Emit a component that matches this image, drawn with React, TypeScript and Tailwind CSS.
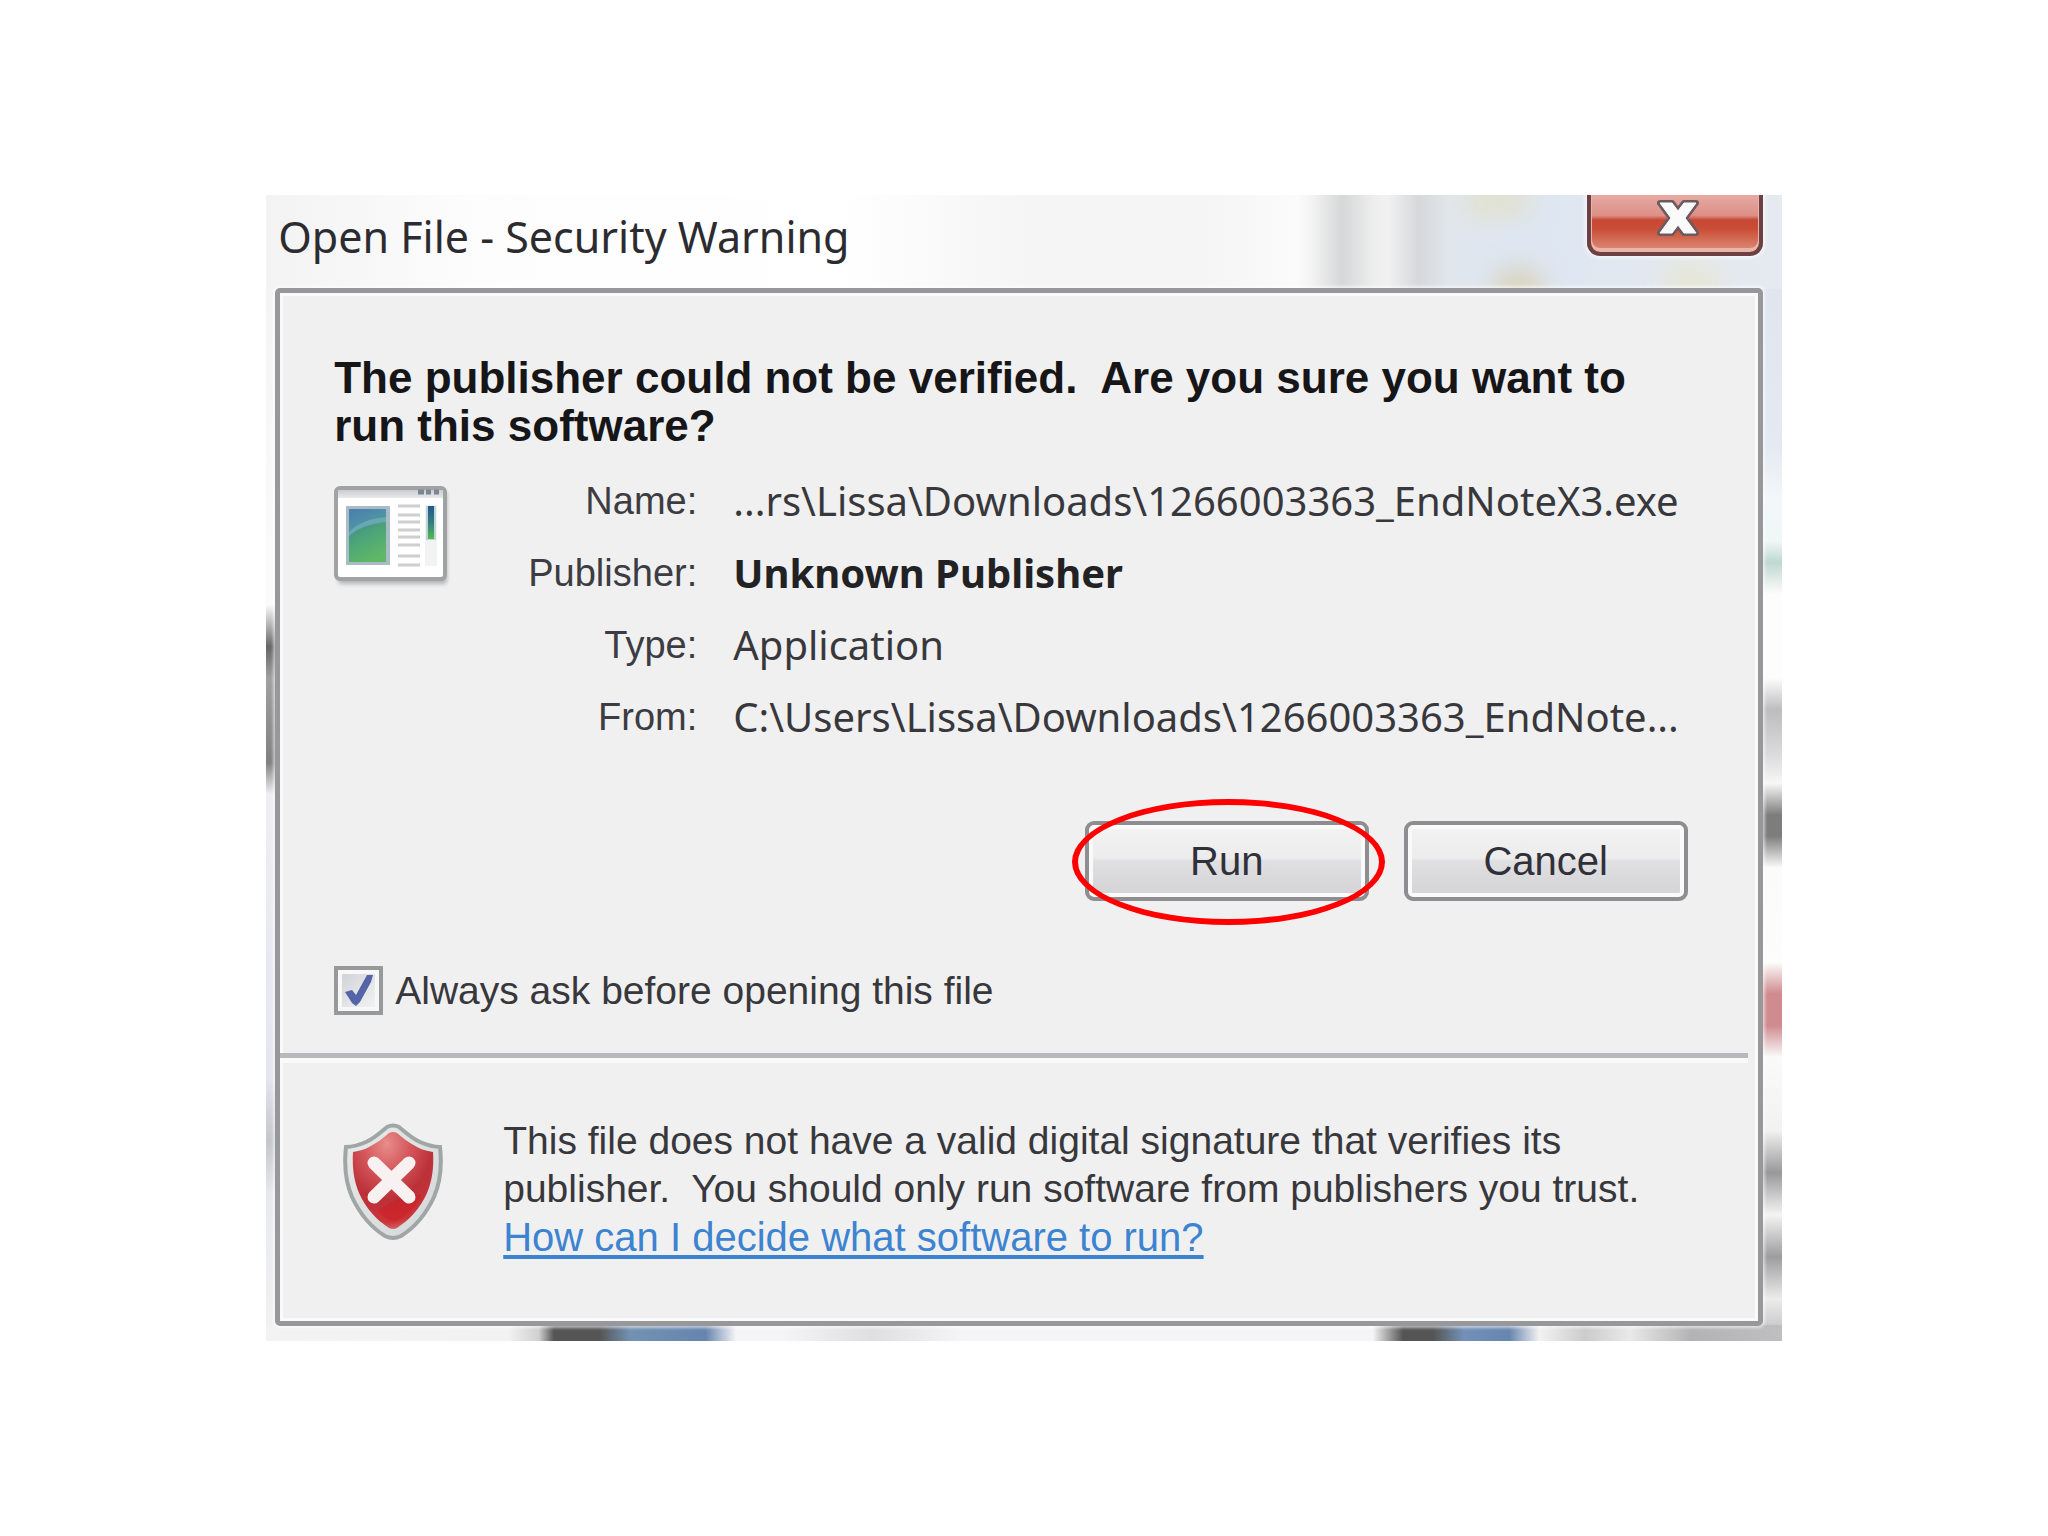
import type { ReactNode } from "react";

const sans = "font-['Liberation_Sans',Arial,sans-serif]";
const humanist = "font-['Noto_Sans','Open_Sans',sans-serif]";

function ProgramIcon() {
  return (
    <svg viewBox="0 0 116 102" className="h-[102px] w-[116px]" aria-hidden="true">
      <defs>
        <linearGradient id="picture" x1="0.2" y1="0" x2="0.5" y2="1">
          <stop offset="0" stopColor="#4a7fb0" />
          <stop offset="0.3" stopColor="#4f93a4" />
          <stop offset="0.55" stopColor="#4a9f86" />
          <stop offset="1" stopColor="#5bb266" />
        </linearGradient>
        <linearGradient id="hill" x1="0" y1="0" x2="0.5" y2="1">
          <stop offset="0" stopColor="#3f8a86" />
          <stop offset="0.5" stopColor="#4da678" />
          <stop offset="1" stopColor="#5fb767" />
        </linearGradient>
        <linearGradient id="scroll" x1="0" y1="0" x2="0" y2="1">
          <stop offset="0" stopColor="#28538c" />
          <stop offset="0.5" stopColor="#357c83" />
          <stop offset="1" stopColor="#55bb4b" />
        </linearGradient>
        <linearGradient id="bar" x1="0" y1="0" x2="0" y2="1">
          <stop offset="0" stopColor="#c9cccf" />
          <stop offset="1" stopColor="#e9e9e9" />
        </linearGradient>
        <filter id="shade" x="-10%" y="-10%" width="120%" height="125%">
          <feGaussianBlur stdDeviation="2" />
        </filter>
      </defs>
      <rect x="4" y="5" width="109" height="93" rx="4" fill="#000" opacity="0.25" filter="url(#shade)" />
      <rect x="2" y="2" width="109" height="91" rx="4" fill="#fff" stroke="#a0a2a4" strokeWidth="4" />
      <rect x="4" y="4" width="105" height="8" fill="url(#bar)" />
      <path d="M84 6h6M92 6h5M100 6h5" stroke="#7b8593" strokeWidth="5" />
      <rect x="12" y="20" width="44" height="59" fill="#a9bcc6" />
      <rect x="15" y="23" width="37" height="53" fill="url(#picture)" />
      <path d="M15 46Q28 33 52 31V38Q30 40 15 52Z" fill="#7db4c4" opacity="0.6" />
      <path d="M15 50Q28 38 52 36V76H15Z" fill="url(#hill)" />
      <path
        d="M64 20h22M64 29h22M64 36h22M64 44h22M64 51h22M64 59h22M64 70h22M64 79h22"
        stroke="#d0cdd0"
        strokeWidth="3"
      />
      <rect x="91" y="19" width="12" height="61" fill="#f3f3f4" />
      <rect x="92" y="20" width="10" height="34" fill="#b9d8d5" />
      <rect x="94" y="20" width="6" height="33" fill="url(#scroll)" />
    </svg>
  );
}

function ShieldIcon() {
  return (
    <svg viewBox="0 0 102 120" className="h-[120px] w-[102px]" aria-hidden="true">
      <defs>
        <radialGradient id="red" cx="0.42" cy="0.12" r="0.95">
          <stop offset="0" stopColor="#e98d8a" />
          <stop offset="0.3" stopColor="#d4585d" />
          <stop offset="0.6" stopColor="#bc3138" />
          <stop offset="0.85" stopColor="#c9343a" />
          <stop offset="1" stopColor="#e58585" />
        </radialGradient>
        <linearGradient id="rim" x1="0" y1="0" x2="1" y2="1">
          <stop offset="0" stopColor="#e9eaea" />
          <stop offset="1" stopColor="#d3d7d7" />
        </linearGradient>
      </defs>
      <path
        d="M45 4Q51 1 57 4C63 9 69 15 78 19C85 22 91 24 98 24C100 42 98 60 92 74C84 91 72 105 59 113Q51 117 43 113C30 105 18 91 10 74C4 60 2 42 4 24C11 24 17 22 24 19C33 15 39 9 45 4Z"
        fill="url(#rim)"
        stroke="#a0a6a6"
        strokeWidth="4"
      />
      <path
        d="M47 10Q51 8 55 10C61 15 67 20 75 24C80 27 86 28 91 29C92 45 90 58 85 70C78 86 67 97 55 105Q51 107 47 105C35 97 24 86 17 70C12 58 10 45 11 29C16 28 22 27 27 24C35 20 41 15 47 10Z"
        fill="url(#red)"
      />
      <path d="M36 88Q60 70 80 72Q70 92 54 98Q44 98 36 88Z" fill="#d31118" opacity="0.35" />
      <path d="M32 40L67 74M67 40L32 74" stroke="#f7f1f1" strokeWidth="13" strokeLinecap="round" />
    </svg>
  );
}

function CloseIcon() {
  const glyph = "M3 3H15L21 11L27 3H39L28 18L39 33H27L21 25L15 33H3L14 18Z";
  return (
    <svg viewBox="0 0 42 37" className="h-[37px] w-[42px]" aria-hidden="true">
      <path d={glyph} fill="#fafafa" stroke="#6b5a60" strokeWidth="6" strokeLinejoin="round" />
      <path d={glyph} fill="#fafafa" stroke="#fafafa" strokeWidth="1" strokeLinejoin="round" />
    </svg>
  );
}

/* Blurred desktop content that shows through the translucent window frame. */
function GlassBackdrop() {
  return (
    <div className="absolute inset-0 overflow-hidden" aria-hidden="true">
      <div className="absolute inset-x-0 top-0 h-[94px] bg-[linear-gradient(90deg,#f3f3f3_0%,#fdfdfd_14%,#ffffff_38%,#f5f5f5_50%,#f5f5f5_62%,#fbfbfb_68%,#f3f3f3_69%,#d6d7d8_71%,#ededed_73%,#f1f1f1_74%,#d6d8da_76%,#e1e6ec_78%,#dde6f2_82%,#e5eaf0_100%)]" />
      <div className="absolute left-[79%] top-[-12px] h-[36px] w-[70px] rounded-full bg-[#e5dfbd] opacity-60 blur-md" />
      <div className="absolute left-[81%] top-[72px] h-[40px] w-[50px] rounded-full bg-[#d9cda8] opacity-70 blur-md" />
      <div className="absolute left-[92%] top-[68px] h-[40px] w-[60px] rounded-full bg-[#e9e6cc] opacity-70 blur-md" />
      <div className="absolute bottom-0 left-0 top-[94px] w-[12px] bg-[linear-gradient(180deg,#f4f4f4_0%,#fbfbfb_30%,#666666_34%,#a0a0a0_37%,#808080_45%,#eeeef3_48%,#e4e5ee_75%,#c4c6cb_81%,#e8e9ee_86%,#f2f2f3_100%)]" />
      <div className="absolute bottom-0 right-0 top-[94px] w-[20px] bg-[linear-gradient(180deg,#e1e6ee_0%,#e5eaf2_15%,#f3f7fa_20%,#eff7f6_24%,#bfd8d0_26%,#fdfdfd_29%,#fdfdfd_37%,#bdbdbf_40%,#d9d8da_44%,#f7f7f7_47%,#7d7d7e_50%,#7d7d7e_52%,#fbfbfb_55%,#fdfdfd_64%,#cf8b8e_67%,#cf8b8e_70%,#fafafa_73%,#f2f2f2_80%,#98989a_84%,#f4f4f4_88%,#9d9d9f_92%,#ececec_96%,#b9b9bb_100%)]" />
      <div className="absolute inset-x-0 bottom-0 h-[16px] bg-[linear-gradient(90deg,#f3f3f3_0%,#f2f2f2_16%,#d0d0d0_18%,#555555_19%,#555555_22%,#7391b2_24%,#6785ad_29%,#f5f5f7_31%,#f5f5f7_34%,#dfdfe1_40%,#f5f5f7_46%,#f5f5f7_73%,#555555_75%,#555555_77%,#7391b8_79%,#6785ad_82%,#f2f2f3_84%,#cccccc_87%,#e9e9e9_90%,#b3b3b5_94%,#bfbfc1_100%)]" />
    </div>
  );
}

function DialogButton({ children }: { children: ReactNode }) {
  return (
    <button
      type="button"
      className={`${sans} h-[80px] w-[284px] rounded-[9px] border-4 border-[#8e8e90] bg-[linear-gradient(180deg,#f3f3f3_0%,#ececed_46%,#e0e0e2_50%,#d3d3d5_100%)] text-[40px] leading-[48px] text-[#303038] shadow-[inset_0_0_0_4px_#fafafa]`}
    >
      {children}
    </button>
  );
}

function Field({ label, children }: { label: string; children: ReactNode }) {
  return (
    <>
      <dt className={`${sans} text-right text-[38px] text-[#3c3c42]`}>{label}</dt>
      <dd className={`${humanist} whitespace-nowrap text-[40px] text-[#38383c]`}>{children}</dd>
    </>
  );
}

export default function App() {
  return (
    <main className="min-h-screen bg-white pt-[195px]">
      <section
        role="dialog"
        aria-labelledby="dialog-title"
        className="relative mx-auto w-[74%] min-w-[1500px] pb-[15px] pl-[9px] pr-[19px]"
      >
        <GlassBackdrop />

        <header className="relative flex h-[93px] items-start justify-between">
          <h1 id="dialog-title" className={`${humanist} pl-[3px] pt-[14px] text-[43px] leading-[56px] text-[#2c2c30]`}>
            Open File - Security Warning
          </h1>
          <button
            type="button"
            aria-label="Close"
            className="flex h-[61px] w-[176px] justify-center rounded-b-[13px] border-4 border-t-0 border-[#6d4043] bg-[linear-gradient(180deg,#e6aaa3_0%,#dd8f86_36%,#c64733_44%,#cb4e36_60%,#dc907c_100%)] pl-[6px] pt-[5px] shadow-[inset_0_-3px_0_1px_#e9b4a9,0_0_4px_2px_#ffffffb0]"
          >
            <CloseIcon />
          </button>
        </header>

        <div className="relative rounded-[5px] border-[5px] border-[#98989a] bg-[#f0f0f1] shadow-[inset_0_0_0_3px_#fafafa,0_0_3px_2px_#ffffff90]">
          <div className="pb-[38px] pl-[54px] pr-[70px] pt-[61px]">
            <h2 className={`${sans} whitespace-nowrap text-[44px] font-bold leading-[48px] text-[#161618]`}>
              The publisher could not be verified.{"\u00a0 "}Are you sure you want to
              <br />
              run this software?
            </h2>

            <div className="mt-[15px] flex">
              <div className="pt-[21px]">
                <ProgramIcon />
              </div>
              <dl className="grid grid-cols-[247px_1fr] gap-x-[36px] leading-[72px]">
                <Field label="Name:">...rs\Lissa\Downloads\1266003363_EndNoteX3.exe</Field>
                <Field label="Publisher:">
                  <strong className="font-bold text-[#222224]">Unknown Publisher</strong>
                </Field>
                <Field label="Type:">Application</Field>
                <Field label="From:">C:\Users\Lissa\Downloads\1266003363_EndNote...</Field>
              </dl>
            </div>

            <div className="mt-[68px] flex justify-end gap-[35px]">
              <div className="relative">
                <DialogButton>Run</DialogButton>
                <span
                  aria-hidden="true"
                  className="pointer-events-none absolute -bottom-[24px] -left-[13px] -right-[16px] -top-[22px] rounded-[50%] border-[6px] border-[#fe0000]"
                />
              </div>
              <DialogButton>Cancel</DialogButton>
            </div>

            <div className="mt-[65px] flex items-center gap-[12px]">
              <span className="relative block size-[49px]">
                <input
                  id="always-ask"
                  type="checkbox"
                  defaultChecked
                  className="peer block size-full appearance-none border-[4px] border-[#98999b] bg-[linear-gradient(135deg,#cdd0d4,#f6f6f7)] shadow-[inset_0_0_0_4px_#f8f8f8]"
                />
                <svg
                  viewBox="0 0 49 49"
                  className="pointer-events-none invisible absolute inset-0 peer-checked:visible"
                  aria-hidden="true"
                >
                  <path d="M11 26L18 24L22 29L33 9L39 9L37 16L26 36L22 40L18 37Z" fill="#5563a8" />
                </svg>
              </span>
              <label htmlFor="always-ask" className={`${sans} text-[39px] leading-[48px] text-[#38383c]`}>
                Always ask before opening this file
              </label>
            </div>
          </div>

          <hr className="ml-0 mr-[10px] h-[10px] border-0 border-t-[5px] border-[#b9b9bb] bg-[#fafafb]" />

          <div className="flex gap-[59px] pb-[60px] pl-[62px] pt-[54px]">
            <div className="pt-[6px]">
              <ShieldIcon />
            </div>
            <div className={`${sans} text-[39px] leading-[48px] text-[#38383c]`}>
              <p>
                This file does not have a valid digital signature that verifies its
                <br />
                publisher.{"\u00a0 "}You should only run software from publishers you trust.
              </p>
              <a
                href="#how"
                className="block text-[40px] text-[#3c83d0] underline decoration-[4px] underline-offset-[4px]"
              >
                How can I decide what software to run?
              </a>
            </div>
          </div>
        </div>
      </section>
    </main>
  );
}
